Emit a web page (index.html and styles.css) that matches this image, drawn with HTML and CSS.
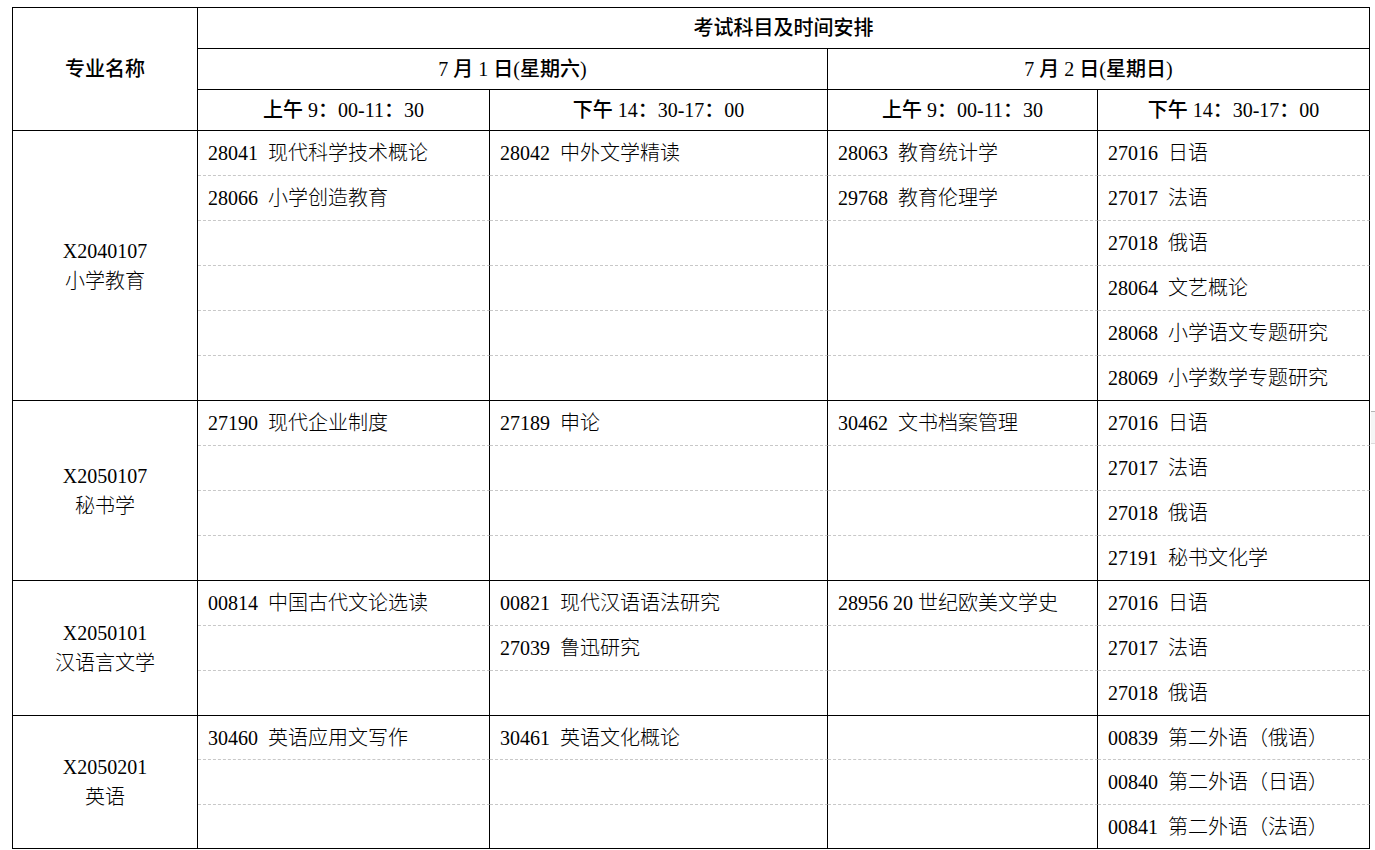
FILE: index.html
```html
<!DOCTYPE html>
<html lang="zh-CN">
<head>
<meta charset="utf-8">
<title>考试科目及时间安排</title>
<link rel="stylesheet" href="styles.css">
</head>
<body>
<table class="schedule">
  <colgroup>
    <col class="c1"><col class="c2"><col class="c3"><col class="c4"><col class="c5">
  </colgroup>
  <thead>
    <tr>
      <th rowspan="3" class="major-head">专业名称</th>
      <th colspan="4">考试科目及时间安排</th>
    </tr>
    <tr>
      <th colspan="2">7 月 1 日(星期六)</th>
      <th colspan="2">7 月 2 日(星期日)</th>
    </tr>
    <tr>
      <th class="time">上午 9：00-11：30</th>
      <th class="time">下午 14：30-17：00</th>
      <th class="time">上午 9：00-11：30</th>
      <th class="time">下午 14：30-17：00</th>
    </tr>
  </thead>
  <tbody>
    <tr>
      <td rowspan="6" class="major">X2040107<br>小学教育</td>
      <td>28041&nbsp; 现代科学技术概论</td><td>28042&nbsp; 中外文学精读</td><td>28063&nbsp; 教育统计学</td><td>27016&nbsp; 日语</td>
    </tr>
    <tr><td>28066&nbsp; 小学创造教育</td><td></td><td>29768&nbsp; 教育伦理学</td><td>27017&nbsp; 法语</td></tr>
    <tr><td></td><td></td><td></td><td>27018&nbsp; 俄语</td></tr>
    <tr><td></td><td></td><td></td><td>28064&nbsp; 文艺概论</td></tr>
    <tr><td></td><td></td><td></td><td>28068&nbsp; 小学语文专题研究</td></tr>
    <tr class="last"><td></td><td></td><td></td><td>28069&nbsp; 小学数学专题研究</td></tr>
  </tbody>
  <tbody>
    <tr>
      <td rowspan="4" class="major">X2050107<br>秘书学</td>
      <td>27190&nbsp; 现代企业制度</td><td>27189&nbsp; 申论</td><td>30462&nbsp; 文书档案管理</td><td>27016&nbsp; 日语</td>
    </tr>
    <tr><td></td><td></td><td></td><td>27017&nbsp; 法语</td></tr>
    <tr><td></td><td></td><td></td><td>27018&nbsp; 俄语</td></tr>
    <tr class="last"><td></td><td></td><td></td><td>27191&nbsp; 秘书文化学</td></tr>
  </tbody>
  <tbody>
    <tr>
      <td rowspan="3" class="major">X2050101<br>汉语言文学</td>
      <td>00814&nbsp; 中国古代文论选读</td><td>00821&nbsp; 现代汉语语法研究</td><td>28956 20 世纪欧美文学史</td><td>27016&nbsp; 日语</td>
    </tr>
    <tr><td></td><td>27039&nbsp; 鲁迅研究</td><td></td><td>27017&nbsp; 法语</td></tr>
    <tr class="last"><td></td><td></td><td></td><td>27018&nbsp; 俄语</td></tr>
  </tbody>
  <tbody class="final">
    <tr class="short">
      <td rowspan="3" class="major">X2050201<br>英语</td>
      <td>30460&nbsp; 英语应用文写作</td><td>30461&nbsp; 英语文化概论</td><td></td><td>00839&nbsp; 第二外语（俄语）</td>
    </tr>
    <tr><td></td><td></td><td></td><td>00840&nbsp; 第二外语（日语）</td></tr>
    <tr class="last short"><td></td><td></td><td></td><td>00841&nbsp; 第二外语（法语）</td></tr>
  </tbody>
</table>
<div class="edge-tab"></div>
</body>
</html>
```
FILE: styles.css
```css
html, body {
  margin: 0;
  padding: 0;
  background: #fff;
}

body {
  font-family: "Liberation Serif", "Noto Sans CJK SC", serif;
  font-size: 20px;
  color: #000;
}

.schedule {
  margin: 7px 0 0 12px;
  border-collapse: separate;
  border-spacing: 0;
  table-layout: fixed;
  width: 1358px;
  border-top: 1px solid #000;
  border-left: 1px solid #000;
}

.c1 { width: 185px; }
.c2 { width: 292px; }
.c3 { width: 338px; }
.c4 { width: 270px; }
.c5 { width: 272px; }

.schedule th {
  height: 41px;
  box-sizing: border-box;
  padding: 0;
  text-align: center;
  vertical-align: middle;
  font-weight: 500;
  line-height: 24px;
  border-right: 1px solid #000;
  border-bottom: 1px solid #000;
}

.schedule td {
  height: 45px;
  box-sizing: border-box;
  padding: 0 10px;
  vertical-align: middle;
  line-height: 24px;
  font-weight: 300;
  white-space: nowrap;
  border-right: 1px solid #000;
  border-bottom: 1px dashed #c8c8c8;
}

.schedule tr.last td,
.schedule td.major {
  border-bottom: 1px solid #000;
}

.schedule tr.short td {
  height: 44px;
}

.schedule td.major {
  text-align: center;
  line-height: 30px;
  padding: 0;
}

.edge-tab {
  position: fixed;
  left: 1371px;
  top: 411px;
  width: 4px;
  height: 31px;
  background: #f5f5f5;
  border-top: 1px solid #b5b5b5;
  border-bottom: 1px solid #dcdcdc;
}
```
